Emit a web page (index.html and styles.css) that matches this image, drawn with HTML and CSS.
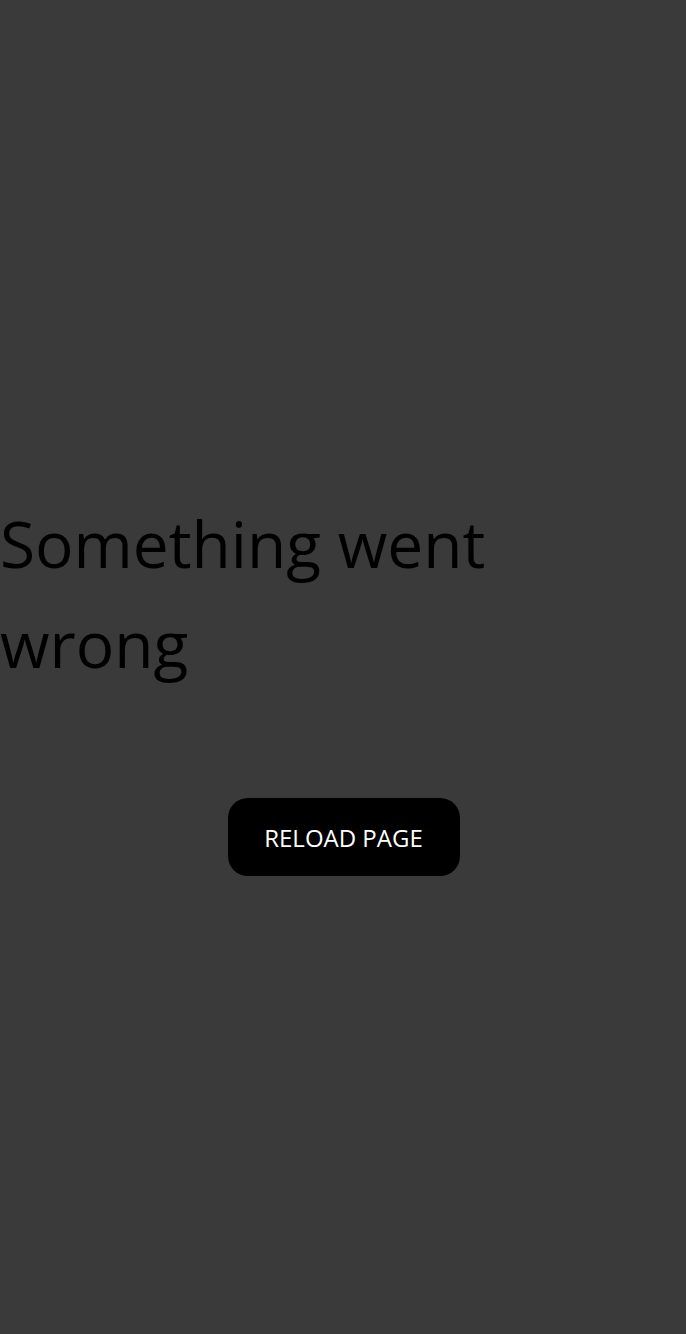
FILE: index.html
```html
<!DOCTYPE html>
<html lang="en">
<head>
<meta charset="utf-8">
<title>Something went wrong</title>
<link rel="stylesheet" href="styles.css">
</head>
<body>
<main class="error-page">
  <h1 class="error-title">Something went wrong</h1>
  <button class="reload-btn" type="button">RELOAD PAGE</button>
</main>
</body>
</html>
```

FILE: styles.css
```css
html, body {
  margin: 0;
  padding: 0;
  background: #3a3a3a;
  font-family: "Open Sans", "Liberation Sans", sans-serif;
}
.error-page {
  min-height: 100vh;
  box-sizing: border-box;
  display: flex;
  flex-direction: column;
  align-items: center;
  padding-top: 494px;
}
.error-title {
  align-self: stretch;
  margin: 0;
  font-size: 64px;
  font-weight: 400;
  line-height: 100px;
  color: #000;
  max-width: 520px;
}
.reload-btn {
  margin-top: 104px;
  margin-left: 1px;
  width: 232px;
  height: 78px;
  border: none;
  border-radius: 20px;
  background: #000;
  color: #fff;
  font-family: "Open Sans", "Liberation Sans", sans-serif;
  font-size: 24px;
  padding: 0;
}
```
